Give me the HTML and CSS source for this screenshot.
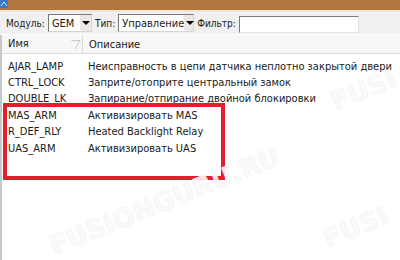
FILE: index.html
```html
<!DOCTYPE html>
<html lang="ru">
<head>
    <meta charset="UTF-8">
    <title>Модули</title>
    <link rel="stylesheet" href="styles.css">
</head>
<body>
    <div class="titlebar">
        <svg class="title-svg" width="400" height="10" viewBox="0 0 400 10">
            <rect width="400" height="10" fill="#b0773f"/>
            <rect x="0" y="0" width="8" height="8" fill="#3a78c8"/>
            <path d="M1 6 L4 2 L7 6" stroke="#cfe3ff" stroke-width="1" fill="none"/>
        </svg>
    </div>
    <div class="edge"></div>

    <!-- Filter bar -->
    <div class="toolbar">
        <span class="lbl">Модуль:</span>
        <div class="combo combo-module"><span class="val">GEM</span><span class="arrow"></span></div>
        <span class="lbl">Тип:</span>
        <div class="combo combo-type"><span class="val">Управление</span><span class="arrow"></span></div>
        <span class="lbl">Фильтр:</span>
        <div class="filter"></div>
    </div>

    <!-- List of signals -->
    <div class="list">
        <div class="head">
            <div class="col-name">Имя<span class="sort"></span></div>
            <div class="col-desc">Описание</div>
        </div>
        <div class="row"><div class="col-name">AJAR_LAMP</div><div class="col-desc">Неисправность в цепи датчика неплотно закрытой двери</div></div>
        <div class="row"><div class="col-name">CTRL_LOCK</div><div class="col-desc">Заприте/отоприте центральный замок</div></div>
        <div class="row"><div class="col-name">DOUBLE_LK</div><div class="col-desc">Запирание/отпирание двойной блокировки</div></div>
        <div class="row"><div class="col-name">MAS_ARM</div><div class="col-desc">Активизировать MAS</div></div>
        <div class="row"><div class="col-name">R_DEF_RLY</div><div class="col-desc">Heated Backlight Relay</div></div>
        <div class="row"><div class="col-name">UAS_ARM</div><div class="col-desc">Активизировать UAS</div></div>
    </div>

    <!-- Red highlight drawn over the list -->
    <div class="highlight"></div>

    <!-- Watermark layer -->
    <div class="marks">
        <div class="mark mark-1">FUSIONGURU.RU</div>
        <div class="mark mark-2">FUSI</div>
        <div class="mark mark-3">FUSI</div>
    </div>
</body>
</html>
```

FILE: styles.css
```css
html {
    background: #ffffff;
}

body {
    margin: 0;
    width: 400px;
    height: 260px;
    overflow: hidden;
    font-family: 'DejaVu Sans Condensed', 'DejaVu Sans', sans-serif;
    font-stretch: condensed;
    font-size: 11px;
    color: #1a1a1a;
    position: relative;
}

.titlebar {
    height: 10px;
    line-height: 0;
    background: #b0773f;
}

.title-svg {
    display: block;
}

.edge {
    height: 2px;
    background: #f3e6d8;
}

.toolbar {
    height: 22px;
    background-color: #f0f0f0;
    display: flex;
    align-items: center;
    padding-left: 6px;
    font-size: 10px;
}

.lbl {
    margin-right: 3px;
}

.combo {
    height: 18px;
    box-sizing: border-box;
    border: 1px solid #7a7a7a;
    border-right-color: #d6d6d6;
    border-bottom-color: #d6d6d6;
    background: #ffffff;
    display: flex;
    align-items: center;
    margin-right: 3px;
    font-size: 11px;
}

.combo .val {
    flex: 1;
    padding-left: 3px;
}

.combo .arrow {
    width: 11px;
    height: 16px;
    background: #ece9e4;
    position: relative;
}

.combo .arrow::after {
    content: "";
    position: absolute;
    left: 2px;
    top: 6px;
    border-left: 4px solid transparent;
    border-right: 4px solid transparent;
    border-top: 4px solid #000;
}

.combo-module {
    width: 44px;
}

.combo-type {
    width: 76px;
}

.filter {
    width: 120px;
    height: 17px;
    box-sizing: border-box;
    border: 1px solid #7a7a7a;
    border-right-color: #e4e4e4;
    border-bottom-color: #e4e4e4;
    background: #ffffff;
    margin-top: 2px;
}

.list {
    border-left: 2px solid #c8c8c8;
    height: 226px;
    background: #ffffff;
}

.head {
    height: 18px;
    display: flex;
    align-items: center;
    background: #f7f7f7;
    border-bottom: 1px solid #dcdcdc;
    margin-top: 1px;
}

.head .col-name {
    border-right: 1px solid #d8d8d8;
    height: 18px;
    line-height: 18px;
    position: relative;
}

.sort {
    position: absolute;
    right: 4px;
    top: 5px;
    width: 8px;
    height: 8px;
    border-top: 1px solid #c8c8c8;
    border-right: 1px solid #c8c8c8;
    transform: skewX(-30deg);
}

.row {
    height: 16.4px;
    display: flex;
    align-items: center;
}

.col-name {
    width: 74px;
    padding-left: 6px;
    flex-shrink: 0;
}

.col-desc {
    padding-left: 6px;
    white-space: nowrap;
}

.head + .row {
    margin-top: 4px;
}

.highlight {
    position: absolute;
    left: 3px;
    top: 103px;
    width: 214px;
    height: 69px;
    border: 4px solid #e0202c;
}

.marks {
    position: absolute;
    left: 0;
    top: 0;
    width: 400px;
    height: 260px;
    overflow: hidden;
    pointer-events: none;
}

.mark {
    position: absolute;
    font-family: 'DejaVu Sans', sans-serif;
    font-stretch: normal;
    font-weight: bold;
    font-size: 26px;
    color: rgba(255, 255, 255, 0.9);
    text-shadow: 0 0 1px rgba(0, 0, 0, 0.16);
    transform: rotate(-22deg);
    white-space: nowrap;
}

.mark-1 {
    left: 42px;
    top: 186px;
}

.mark-2 {
    left: 330px;
    top: 75px;
}

.mark-3 {
    left: 322px;
    top: 212px;
}
```
